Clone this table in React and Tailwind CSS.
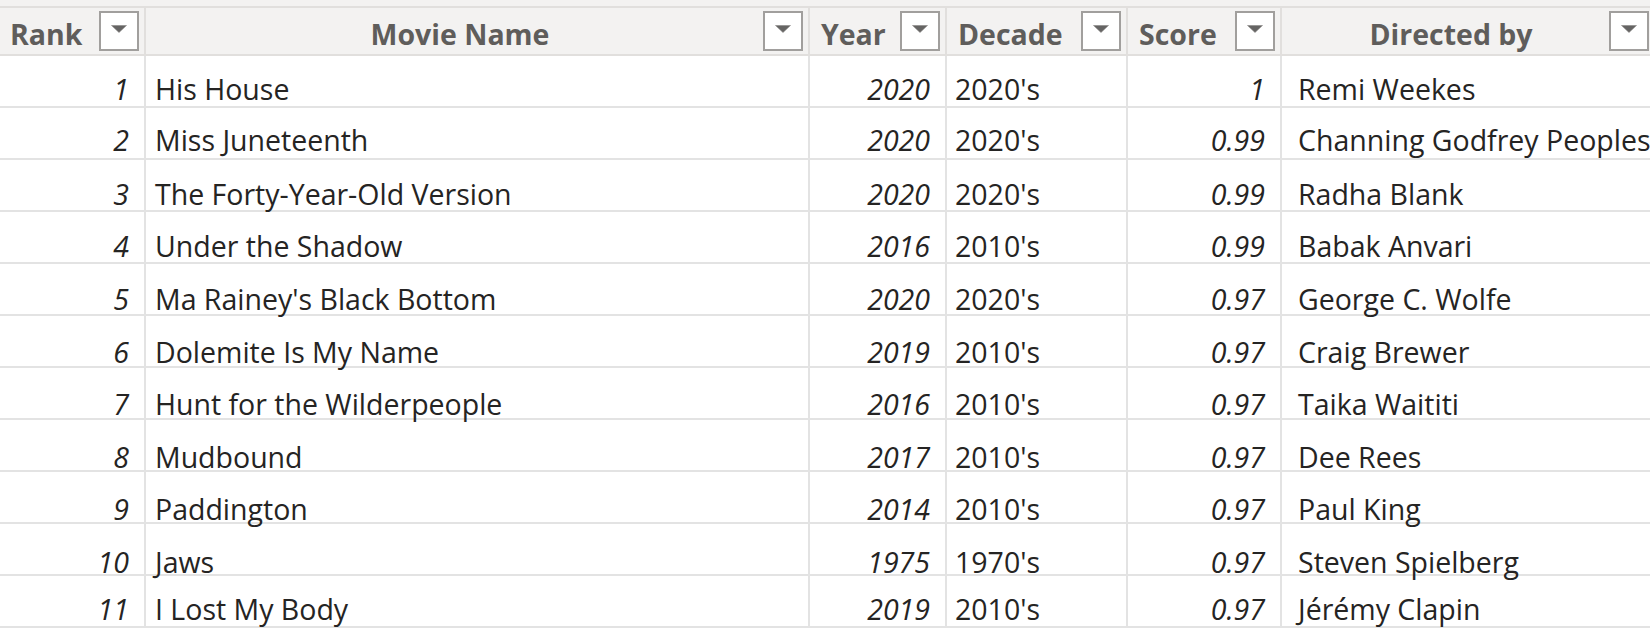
import React from "react";

const rows = [
  [1, "His House", 2020, "2020's", "1", "Remi Weekes", "pt-[19px]"],
  [2, "Miss Juneteenth", 2020, "2020's", "0.99", "Channing Godfrey Peoples", "pt-[18px]"],
  [3, "The Forty-Year-Old Version", 2020, "2020's", "0.99", "Radha Blank", "pt-[20px]"],
  [4, "Under the Shadow", 2016, "2010's", "0.99", "Babak Anvari", "pt-[20px]"],
  [5, "Ma Rainey's Black Bottom", 2020, "2020's", "0.97", "George C. Wolfe", "pt-[21px]"],
  [6, "Dolemite Is My Name", 2019, "2010's", "0.97", "Craig Brewer", "pt-[22px]"],
  [7, "Hunt for the Wilderpeople", 2016, "2010's", "0.97", "Taika Waititi", "pt-[22px]"],
  [8, "Mudbound", 2017, "2010's", "0.97", "Dee Rees", "pt-[23px]"],
  [9, "Paddington", 2014, "2010's", "0.97", "Paul King", "pt-[23px]"],
  [10, "Jaws", 1975, "1970's", "0.97", "Steven Spielberg", "pt-[24px]"],
  [11, "I Lost My Body", 2019, "2010's", "0.97", "Jérémy Clapin", "pt-[19px]"],
];

const grid = "grid grid-cols-[146px_664px_137px_181px_154px_372px]";

function FilterBox() {
  return (
    <div className="w-10 h-10 shrink-0 border-2 border-[#a19f9d] bg-white flex justify-center pt-[12px]">
      <svg width="16" height="8" viewBox="0 0 16 8">
        <path d="M0.5 0.5 L15.5 0.5 L8 7.5 Z" fill="#656463" stroke="#8a8886" strokeWidth="0.6" strokeLinejoin="round" />
      </svg>
    </div>
  );
}

function HeadCell({ label, center, last, padLeft = "pl-[11px]" }) {
  return (
    <div className={`flex items-center ${padLeft} pr-[5px] h-full ${last ? "" : "border-r-2 border-[#e1dfdd]"}`}>
      <div className={`flex-1 pt-[6px] leading-[28px] whitespace-nowrap ${center ? "text-center" : "text-left"}`}>{label}</div>
      <FilterBox />
    </div>
  );
}

export default function App() {
  return (
    <div
      className="w-[1650px] h-[630px] overflow-hidden bg-white"
      style={{ fontFamily: '"Open Sans", "Noto Sans", sans-serif' }}
    >
      <div className="h-[6px] bg-[#f3f2f1]" />
      <div className={`${grid} h-[50px] bg-[#f3f2f1] border-t-2 border-b-2 border-[#e1dfdd] text-[28.5px] font-bold text-[#5f5d5b]`}>
        <HeadCell label="Rank" padLeft="pl-[10px]" />
        <HeadCell label="Movie Name" center />
        <HeadCell label="Year" />
        <HeadCell label="Decade" />
        <HeadCell label="Score" />
        <HeadCell label="Directed by" center last />
      </div>
      {rows.map((r) => (
        <div key={r[0]} className={`${grid} h-[52px] border-b-2 border-[#e3e3e3] text-[28.5px] leading-[28px] text-[#252423]`}>
          <div className={`flex items-start justify-end pr-[15px] ${r[6]} italic border-r-2 border-[#e3e3e3]`}>{r[0]}</div>
          <div className={`flex items-start pl-[9px] ${r[6]} whitespace-nowrap border-r-2 border-[#e3e3e3]`}>{r[1]}</div>
          <div className={`flex items-start justify-end pr-[15px] ${r[6]} italic border-r-2 border-[#e3e3e3]`}>{r[2]}</div>
          <div className={`flex items-start pl-[8px] ${r[6]} whitespace-nowrap border-r-2 border-[#e3e3e3]`}>{r[3]}</div>
          <div className={`flex items-start justify-end pr-[15px] ${r[6]} italic border-r-2 border-[#e3e3e3]`}>{r[4]}</div>
          <div className={`flex items-start pl-[16px] ${r[6]} whitespace-nowrap`}>{r[5]}</div>
        </div>
      ))}
    </div>
  );
}
